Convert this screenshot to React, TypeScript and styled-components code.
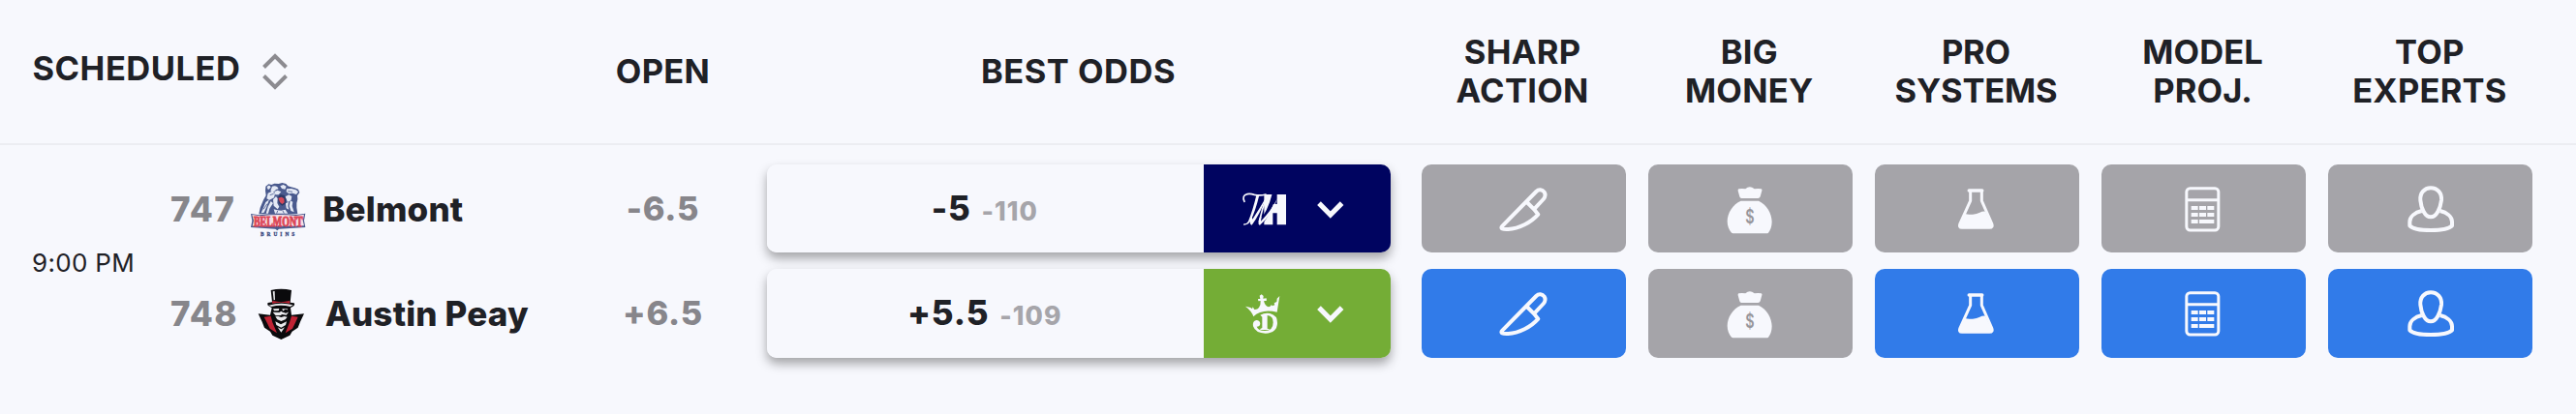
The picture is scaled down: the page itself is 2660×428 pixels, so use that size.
import React, { FC, ReactNode } from 'react'
import styled, { createGlobalStyle } from 'styled-components'

const colors = {
  background: '#f7f8fd',
  text: '#1f2126',
  muted: '#87868b',
  light: '#a6a5aa',
  inactive: '#a5a4a9',
  active: '#317be9',
  border: '#ecedf2',
  navy: '#000460',
  green: '#74ad36',
}

const columns = '176px 422px 175px 683px repeat(5, 234.2px) 1fr'

const GlobalStyle = createGlobalStyle`
  body {
    margin: 0;
    background: ${colors.background};
    color: ${colors.text};
    font-family: Inter, 'Liberation Sans', sans-serif;
  }
`

const Table = styled.div`
  height: 428px;
  overflow: hidden;
`

const HeaderRow = styled.div`
  display: grid;
  grid-template-columns: ${columns};
  align-items: center;
  height: 148px;
  border-bottom: 2px solid ${colors.border};
`

const HeaderCell = styled.div<{ $spacing?: string }>`
  padding-right: 2px;
  font-size: 34.5px;
  font-weight: 700;
  line-height: 40px;
  letter-spacing: ${props => props.$spacing || '0.3px'};
  text-align: center;
`

const ScheduledCell = styled(HeaderCell)`
  grid-column: span 2;
  display: flex;
  align-items: center;
  gap: 22px;
  padding-left: 33.5px;
`

const ScheduledLabel = styled.span`
  margin-top: -6px;
`

const Game = styled.div`
  display: grid;
  grid-template-columns: ${columns};
  padding-top: 20px;
`

const Time = styled.div`
  display: flex;
  align-items: center;
  padding-left: 33px;
  font-size: 26px;
  letter-spacing: 0.3px;
  padding-top: 4px;
`

const Column = styled.div`
  display: flex;
  flex-direction: column;
  gap: 17px;
`

const OddsColumn = styled(Column)`
  padding: 0 20px 0 19px;
`

const IndicatorColumn = styled(Column)`
  padding: 0 11.6px;
`

const Team = styled.div`
  display: flex;
  align-items: center;
  height: 91.3px;
  font-size: 35px;
  font-weight: 800;
  line-height: 40px;
`

const Rotation = styled.span`
  color: ${colors.muted};
  letter-spacing: 1.3px;
  margin-right: 13px;
`

const TeamName = styled.span`
  letter-spacing: 0.2px;
  margin-left: 15px;
`

const Open = styled.div`
  display: flex;
  align-items: center;
  justify-content: center;
  height: 91.3px;
  padding-right: 2px;
  color: ${colors.muted};
  font-size: 34.5px;
  font-weight: 800;
  line-height: 40px;
  letter-spacing: 0.7px;
`

const OddsButton = styled.div`
  display: flex;
  height: 91.3px;
  border-radius: 10px;
  box-shadow: 0 6px 11px rgba(0, 0, 0, 0.34);
`

const OddsValue = styled.div`
  flex: 1;
  display: flex;
  align-items: baseline;
  justify-content: center;
  gap: 11px;
  padding-right: 1px;
  border-radius: 10px 0 0 10px;
  background: ${colors.background};
  line-height: 90px;
`

const Line = styled.span`
  font-size: 35px;
  font-weight: 800;
  letter-spacing: 0.8px;
`

const Price = styled.span`
  color: ${colors.light};
  font-size: 26.5px;
  font-weight: 800;
  letter-spacing: 1px;
`

const Book = styled.div<{ $color: string }>`
  display: flex;
  align-items: center;
  gap: 26px;
  box-sizing: border-box;
  width: 193.5px;
  padding-left: 37px;
  border-radius: 0 10px 10px 0;
  background: ${props => props.$color};
`

const Indicator = styled.div<{ $active?: boolean }>`
  display: flex;
  align-items: center;
  justify-content: center;
  height: 91.3px;
  border-radius: 10px;
  background: ${props => (props.$active ? colors.active : colors.inactive)};
`

const Icon = styled.svg`
  display: block;
  flex: none;
  width: 60px;
  height: 60px;
  fill: none;
  stroke: ${colors.background};
  stroke-linejoin: round;
`

const Logo = styled.svg<{ $width: number }>`
  display: block;
  flex: none;
  width: ${props => props.$width}px;
  height: 60px;
  overflow: visible;
`

const SortIcon = styled.svg`
  width: 28px;
  height: 40px;
  fill: none;
  stroke: #8c8b90;
  stroke-width: 4;
`

const ChevronIcon = styled.svg`
  width: 36px;
  height: 36px;
  fill: none;
  stroke: ${colors.background};
  stroke-width: 5.2;
`

const Wordmark = styled.text`
  font-family: 'Liberation Serif', serif;
  font-weight: 700;
`

const Dollar = styled.text`
  font-family: Inter, sans-serif;
  font-size: 60px;
  font-weight: 600;
`

const Sort: FC = () => (
  <SortIcon viewBox="0 0 28 40">
    <path d="M2.500 15.500 14 4l11.500 11.500M2.500 24.500 14 36l11.500-11.500" />
  </SortIcon>
)

const Chevron: FC = () => (
  <ChevronIcon viewBox="0 0 36 36">
    <path d="M6 12.200 17.800 24 29.600 12.200" />
  </ChevronIcon>
)

const Belmont: FC = () => (
  <Logo $width={62} viewBox="48 47 186 180">
    <path
      fill="#4a5a8e"
      d="M82 153l4-20 10-24 8-14-2-14 1-14 9-7 9 2 9-4 13 1 11-3 12 3 6 7 9 3 12 3 11 4 4 10-7 10 1 11-3 12 0 14 3 20z"
    />
    <path
      fill="#e4e9f5"
      d="M107 70q2-7 9-5l3 5-8 8zM123 67q9-4 16 2l4 6-8 2-9 9-8-5zM148 66l10-4 9 5-4 9-10-2zM110 88l13-6 9 7-3 13-14 7-9-4zM168 75l15-1 14 4 7 6-6 8-12-4-11 2-8-6zM130 83l10-4 11 5-8 9-10 0zM126 108l9-10 5 7-1 14 6 11-5 8-12-11zM164 99l11-6 9 5-2 11-11 7zM103 116l11-8-8 22-8 18-9 2zM119 113l7 6-11 17-4 15h-7l6-21zM179 111l8 4-2 13 6 19-10-4-5-15zM128 138l11 3 12 1 13-3 8 12h-40zM165 120l9-5-2 13 3 11-8-4z"
    />
    <path
      stroke="#4a5a8e"
      strokeWidth="2.5"
      fill="none"
      d="M116 94l12-4M96 138l12-17M172 82l14 2M140 143l-3 8M156 143l4 8"
    />
    <path fill="#2c3966" d="M141 100l8-8 12 3 5 12-2 14-10 6-10-7z" />
    <path fill="#d4495a" d="M142 103l10-3 8 5 1 12-7 5-7-6z" />
    <path fill="#4a5a8e" d="M57 152l26 4q58-8 116-1l27-4-4 22 4 21-82 5-5 5-6-5-76-5 4-20z" />
    <path fill="#f6dfe5" d="M61 155l25 4q56-8 111-1l25-4-4 18 4 17-35 1q-45-1-92 1l-33-1 4-17z" />
    <Wordmark
      x="66"
      y="190"
      fontSize="44"
      fill="#dc4655"
      stroke="#dc4655"
      strokeWidth="3"
      textLength="152"
      lengthAdjust="spacingAndGlyphs"
    >
      BELMONT
    </Wordmark>
    <Wordmark x="87" y="220" fontSize="16" fill="#3b4b82" stroke="#3b4b82" strokeWidth="1" textLength="106">
      BRUINS
    </Wordmark>
  </Logo>
)

const AustinPeay: FC = () => (
  <Logo $width={62} viewBox="57 372 186 180">
    <path
      fill="#0a0a0c"
      d="M119 390q32-7 64 0l-4 38 12 2q3 2 0 8l-11 7 3 22 39-4-12 25-7 18-18 12-7 12-27 13-27-13-7-12-18-12-7-18-12-25 37 4 5-22-12-8q-3-6 0-8l13-2z"
    />
    <path
      fill="#c02334"
      d="M124 423q27 7 53 0l1 8q-27-5-55 0zM98 473l21-3 5 20 14 33-22-14-8-16zM203 473l-20-3-6 20-13 33 22-14 8-16z"
    />
    <path
      fill="#e9e9ec"
      d="M125 394l6-1 1 27-4 1zM112 437q39-11 76-1l-9 5q-29-7-58 0zM126 448l19-1-2 7-14 0zM154 448l17 0-2 5-13 1zM125 458l20 1 6-4 6 4 17-1-7 9-14-2-3 3-16 1zM133 472l9-1 9 3 10-3 9 2-6 8-13 5-12-5zM133 487l17 9 18-9-3 11-14 8-15-8zM140 505l11 6 11-6-11 16z"
    />
    <circle cx="165" cy="455" r="6" fill="#0a0a0c" />
  </Logo>
)

const WilliamHill: FC = () => (
  <Logo $width={50} viewBox="120 77 150 180">
    <path fill={colors.background} d="M196 122h27v30h13v-30h28v94h-28v-36h-13v36h-27z" />
    <path stroke={colors.navy} strokeWidth="13" fill="none" d="M228 119q-14 58-46 96" />
    <path
      fill={colors.background}
      d="M237 135q-18 53-54 82-6-1-4-9l2-12 7-6-2 15q30-30 51-70zM172 124h9q-12 50-27 80-7 14-22 13l1-4q9 1 14-8 14-34 25-81zM205 126q-23 60-47 91-7 0-5-13l5-14 2 9q22-33 45-73z"
    />
    <path
      stroke={colors.background}
      strokeWidth="5"
      fill="none"
      strokeLinecap="round"
      d="M135 144q-9-19 9-23 9-2 22 2 18 4 35-1M205 126q-15 41-24 80"
    />
  </Logo>
)

const DraftKings: FC = () => (
  <Logo $width={50} viewBox="120 402 150 180">
    <path
      fill={colors.background}
      d="M138 470l16 4 5 4 2-6 5 8q9 1 14-6 6-8 5-21l-7 1-1-7 7 0-2-10 6-4 6 5-1 8 10-1 1 7-9 2q5 17 15 18 5 0 9-7l2 4 8-3-2-6 8-4 1-10 8-8-8 50q-31-8-53 1-12 4-20 13-5-17-25-32z"
    />
    <path
      fill={colors.background}
      fillRule="evenodd"
      d="M184 497q14-8 30-5 24 6 23 30-1 31-37 32-30 0-38-22-3-16 10-19 11 0 12 11-1 9-11 9 6 13 24 13 27 1 27-26 1-19-18-22v41l6 2v2h-28v-3l6-3v-34z"
    />
  </Logo>
)

const Knife: FC = () => (
  <Icon viewBox="69 47 180 180" strokeWidth="12">
    <path d="M94 190 199 83c8-8 19-6 25 2 5 8 3 15-3 22l-29 31 13 16c-22 25-60 45-93 46-16 1-26-2-18-10zM170 116l22 22" />
  </Icon>
)

const MoneyBag: FC = () => (
  <Icon viewBox="81 47 180 180" strokeWidth="0">
    <path
      fill={colors.background}
      d="M136 75q10-2 21 0 13-13 28 0 12-2 21 0 4 2 2 6l-5 18q-2 5-7 5h-51q-5 0-6-5l-5-18q-1-4 2-6zM143 112h55c25 11 41 39 41 65 0 15-5 27-11 34q-2 2-6 2H119q-4 0-6-3c-7-9-12-21-12-34 0-27 17-53 42-64z"
    />
    <Dollar x="157" y="183" fill="#97969b" textLength="28" lengthAdjust="spacingAndGlyphs">
      $
    </Dollar>
  </Icon>
)

const Flask: FC = () => (
  <Icon viewBox="64 47 180 180" strokeWidth="9">
    <path d="M135 82v30l-32 70q-5 13 6 13h85q12 0 7-13l-31-70V82" />
    <path strokeWidth="11" strokeLinecap="round" d="M131 80h40" />
    <path
      fill={colors.background}
      strokeWidth="0"
      d="M118 152q11 3 24 2 13-1 22-6 8-4 17-3l21 43-6 8h-92l-5-8z"
    />
  </Icon>
)

const Calculator: FC = () => (
  <Icon viewBox="77 47 180 180" strokeWidth="9">
    <rect x="112.5" y="73" width="99" height="130" rx="11" />
    <path d="M112 109h100" />
    <path
      strokeWidth="12"
      d="M127 134h21M152 134h21M177 134h21M127 155h21M152 155h21M177 155h21M127 176h21M152 176h46"
    />
  </Icon>
)

const Expert: FC = () => (
  <Icon viewBox="84 47 180 180" strokeWidth="12">
    <path d="M174 72c-20 0-34 16-32 38 2 24 14 52 32 52s30-28 33-52c2-22-12-38-33-38z" />
    <path d="M146 143c-20 5-37 17-37 34v12c17 19 113 19 131 0v-12c0-17-17-29-37-34" />
  </Icon>
)

interface IndicatorData {
  lines: string[]
  icon: ReactNode
  active: boolean[]
  spacing?: string
}

const indicators: IndicatorData[] = [
  { lines: ['SHARP', 'ACTION'], icon: <Knife />, active: [false, true] },
  { lines: ['BIG', 'MONEY'], icon: <MoneyBag />, active: [false, false] },
  { lines: ['PRO', 'SYSTEMS'], icon: <Flask />, active: [false, true], spacing: '-0.2px' },
  { lines: ['MODEL', 'PROJ.'], icon: <Calculator />, active: [false, true], spacing: '0.1px' },
  { lines: ['TOP', 'EXPERTS'], icon: <Expert />, active: [false, true], spacing: '0.2px' },
]

const teams = [
  {
    rotation: '747',
    name: 'Belmont',
    logo: <Belmont />,
    open: '-6.5',
    line: '-5',
    price: '-110',
    book: <WilliamHill />,
    bookColor: colors.navy,
  },
  {
    rotation: '748',
    name: 'Austin Peay',
    logo: <AustinPeay />,
    open: '+6.5',
    line: '+5.5',
    price: '-109',
    book: <DraftKings />,
    bookColor: colors.green,
  },
]

const App: FC = () => (
  <Table>
    <GlobalStyle />
    <HeaderRow>
      <ScheduledCell $spacing="0.5px">
        <ScheduledLabel>SCHEDULED</ScheduledLabel>
        <Sort />
      </ScheduledCell>
      <HeaderCell>OPEN</HeaderCell>
      <HeaderCell $spacing="0.5px">BEST ODDS</HeaderCell>
      {indicators.map(({ lines, spacing }) => (
        <HeaderCell key={lines[1]} $spacing={spacing}>
          {lines[0]}
          <br />
          {lines[1]}
        </HeaderCell>
      ))}
    </HeaderRow>
    <Game>
      <Time>9:00 PM</Time>
      <Column>
        {teams.map(team => (
          <Team key={team.name}>
            <Rotation>{team.rotation}</Rotation>
            {team.logo}
            <TeamName>{team.name}</TeamName>
          </Team>
        ))}
      </Column>
      <Column>
        {teams.map(team => (
          <Open key={team.name}>{team.open}</Open>
        ))}
      </Column>
      <OddsColumn>
        {teams.map(team => (
          <OddsButton key={team.name}>
            <OddsValue>
              <Line>{team.line}</Line>
              <Price>{team.price}</Price>
            </OddsValue>
            <Book $color={team.bookColor}>
              {team.book}
              <Chevron />
            </Book>
          </OddsButton>
        ))}
      </OddsColumn>
      {indicators.map(({ lines, icon, active }) => (
        <IndicatorColumn key={lines[1]}>
          {active.map((isActive, i) => (
            <Indicator key={i} $active={isActive}>
              {icon}
            </Indicator>
          ))}
        </IndicatorColumn>
      ))}
    </Game>
  </Table>
)

export default App
